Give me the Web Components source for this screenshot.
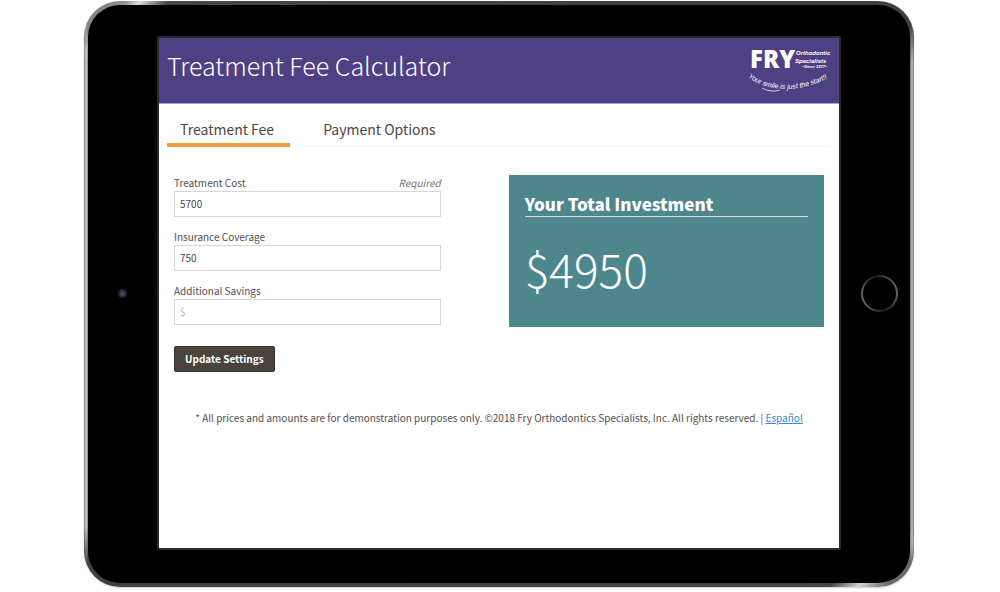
<!DOCTYPE html>
<html lang="en">
<head>
<meta charset="utf-8">
<meta name="viewport" content="width=device-width, initial-scale=1">
<title>Treatment Fee Calculator</title>
<style>
  body { margin: 0; background: #fff; color: #54504c; font-family: "Noto Sans CJK SC", "Open Sans", sans-serif; font-size: 10px; line-height: 16px; }
</style>
</head>
<body>
<tablet-frame>
  <app-header heading="Treatment Fee Calculator"><fry-logo slot="logo"></fry-logo></app-header>
  <tab-bar></tab-bar>
  <fee-calculator>
    <fee-form slot="form">
      <fee-field label="Treatment Cost" value="5700" hint="Required"></fee-field>
      <fee-field label="Insurance Coverage" value="750"></fee-field>
      <fee-field label="Additional Savings" placeholder="$"></fee-field>
    </fee-form>
    <total-card slot="total" heading="Your Total Investment">$4950</total-card>
  </fee-calculator>
  <legal-note>* All prices and amounts are for demonstration purposes only. ©2018 Fry Orthodontics Specialists, Inc. All rights reserved. |</legal-note>
</tablet-frame>
<script>
  const define = (name, markup, setup) => customElements.define(name, class extends HTMLElement {
    constructor() {
      super();
      this.attachShadow({ mode: 'open' }).innerHTML = markup;
    }
    connectedCallback() { if (setup) setup(this, this.shadowRoot); }
  });

  define('tablet-frame', `
    <style>
      :host { display: block; padding: 1px 86px 4px 84px; }
      .rim { position: relative; padding: 4px; border-radius: 36px; box-shadow: 0 1px 2px #0003;
        background: linear-gradient(135deg, #6e7276 0, #8e9296 3%, #d8dadc 4%, #44474c 6%, #3c3e42 50%, #44464a 94%, #d0d2d4 96%, #66696e 98%); }
      .sides { position: absolute; inset: 0; border-radius: 36px;
        background: linear-gradient(90deg, #70757a 0, #c4cbcf 2px, #c4cbcf 3px, #50545a 4px, transparent 5px, transparent calc(100% - 5px), #504e56 calc(100% - 4px), #aaa8b0 calc(100% - 3px), #aaa8b0 calc(100% - 1px), #77757c 100%);
        mask: linear-gradient(transparent 20px, #000 60px, #000 calc(100% - 60px), transparent calc(100% - 20px)); }
      .glass { position: relative; background: #000; border-radius: 32px; display: grid; grid-template-columns: 69px 1fr 69px; align-items: center; padding: 31px 0 33px; }
      .camera { justify-self: center; width: 5px; height: 5px; border-radius: 50%; background: #34456b; border: 2px solid #25252b; }
      .home { justify-self: end; margin-right: 12px; width: 33px; height: 33px; border-radius: 50%; border: 2px solid transparent;
        background: linear-gradient(#000, #000) padding-box, linear-gradient(75deg, #77777b, #1b1b1d 50%, #77777b) border-box; }
      .screen { border: 2px solid #292929; background: #fff; aspect-ratio: 4 / 3; border-radius: 2px; min-width: 0; }
    </style>
    <div class="rim"><div class="sides"></div><div class="glass">
      <span class="camera"></span>
      <main class="screen"><slot></slot></main>
      <span class="home"></span>
    </div></div>`);

  define('app-header', `
    <style>
      :host { display: block; background: #4f4084; color: #fff; border-bottom: 1px solid #a69dc4; }
      header { display: flex; justify-content: space-between; align-items: flex-start; padding: 8px 8px 13px; }
      h1 { margin: 0; font-size: 25px; line-height: 38px; font-weight: 300; }
    </style>
    <header><h1></h1><slot name="logo"></slot></header>`,
    (el, root) => { root.querySelector('h1').textContent = el.getAttribute('heading'); });

  define('fry-logo', `
    <style>
      :host { display: block; width: 84px; height: 44px; }
      svg { display: block; overflow: visible; }
      text { fill: #fff; }
    </style>
    <svg width="84" height="46" viewBox="0 0 84 46" role="img" aria-label="FRY Orthodontic Specialists">
      <defs><path id="smile" d="M1 31 C20 46 54 49 88 28"/></defs>
      <text x="3" y="22" font-family="Open Sans" font-weight="800" font-size="24">FRY</text>
      <g font-family="Liberation Sans" font-style="italic" font-weight="700">
        <text x="49" y="9" font-size="6">Orthodontic</text>
        <text x="48" y="17" font-size="6">Specialists</text>
        <text x="55" y="22" font-size="4">~Since 1977~</text>
      </g>
      <text font-family="Liberation Sans" font-style="italic" font-size="7"><textPath href="#smile">Your smile is just the start!!</textPath></text>
      <path d="M15 42 Q24 47 33 44" stroke="#fff" fill="none" stroke-width=".7"/>
    </svg>`);

  define('tab-bar', `
    <style>
      :host { display: block; padding: 8px 8px 0; }
      div { display: flex; gap: 20px; border-bottom: 1px solid #f6f6f6; }
      button { font: inherit; font-size: 14px; line-height: 20px; color: #4c4743; background: none; border: 0; border-bottom: 4px solid transparent; margin: 0 0 -1px; padding: 7px 16px 4px 13px; cursor: pointer; }
      button[aria-selected="true"] { border-color: #f59b45; }
    </style>
    <div role="tablist">
      <button role="tab" aria-selected="true">Treatment Fee</button>
      <button role="tab" aria-selected="false">Payment Options</button>
    </div>`,
    (el, root) => {
      const tabs = root.querySelectorAll('button');
      tabs.forEach(tab => tab.onclick = () => tabs.forEach(t => t.setAttribute('aria-selected', t === tab)));
    });

  define('fee-calculator', `
    <style>
      :host { display: grid; grid-template-columns: 11fr 13fr; gap: 68px; align-items: start; padding: 28px 15px 0; }
    </style>
    <slot name="form"></slot><slot name="total"></slot>`);

  define('fee-form', `
    <style>
      :host { display: block; }
      form { display: grid; gap: 12px; }
      button { justify-self: start; font: inherit; font-weight: 700; line-height: 16px; color: #fff; background: #4a433e; border: 1px solid #37312d; border-radius: 2px; padding: 4px 10px; margin-top: 9px; cursor: pointer; }
    </style>
    <form><slot></slot><button type="button">Update Settings</button></form>`);

  define('fee-field', `
    <style>
      :host { display: block; }
      .top { display: flex; justify-content: space-between; }
      em { color: #77736f; }
      input { display: block; box-sizing: border-box; width: 100%; height: 26px; padding: 0 5px 2px; border: 1px solid #d6d6d6; border-radius: 0; background: #fff; font: inherit; color: #4c4743; }
      input::placeholder { color: #bbb; opacity: 1; }
    </style>
    <div class="top"><label for="amount"></label></div>
    <input id="amount" type="text" inputmode="decimal">`,
    (el, root) => {
      const input = root.querySelector('input');
      root.querySelector('label').textContent = el.getAttribute('label');
      input.value = el.getAttribute('value') || '';
      input.placeholder = el.getAttribute('placeholder') || '';
      if (el.hasAttribute('hint')) {
        const hint = document.createElement('em');
        hint.textContent = el.getAttribute('hint');
        root.querySelector('.top').append(hint);
        input.required = true;
      }
    });

  define('total-card', `
    <style>
      :host { display: block; background: #4e868e; color: #fff; padding: 16px 16px 24px; }
      h2 { margin: 0 0 16px; font-size: 17px; line-height: 25px; font-weight: 900; border-bottom: 1px solid #d3e1e3; }
      output { display: block; font-size: 46px; line-height: 70px; font-weight: 300; }
    </style>
    <h2></h2><output><slot></slot></output>`,
    (el, root) => { root.querySelector('h2').textContent = el.getAttribute('heading'); });

  define('legal-note', `
    <style>
      :host { display: block; text-align: center; padding: 38px 16px 16px; }
      p { margin: 0; }
      a { color: #2b8fd0; }
    </style>
    <p><slot></slot> <a href="#es" lang="es">Español</a></p>`);
</script>
</body>
</html>
